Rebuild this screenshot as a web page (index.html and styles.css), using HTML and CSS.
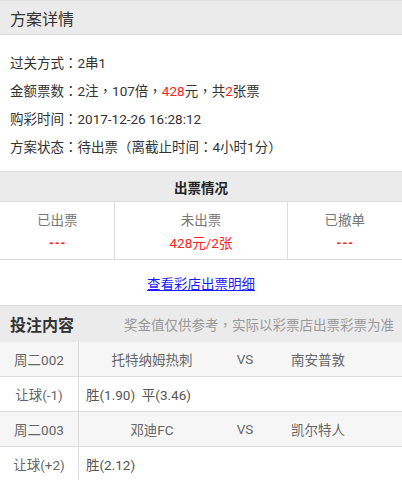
FILE: index.html
```html
<!DOCTYPE html>
<html>
<head>
<meta charset="utf-8">
<link rel="stylesheet" href="styles.css">
</head>
<body>
<div class="page">
  <div class="head-bar"><span class="head-title">方案详情</span></div>
  <div class="info">
    <div class="info-row">过关方式<span class="punct">：</span>2串1</div>
    <div class="info-row">金额票数<span class="punct">：</span>2注<span class="punct">，</span>107倍<span class="punct">，</span><span class="red">428</span>元<span class="punct">，</span>共<span class="red">2</span>张票</div>
    <div class="info-row">购彩时间<span class="punct">：</span>2017-12-26 16:28:12</div>
    <div class="info-row">方案状态<span class="punct">：</span>待出票<span class="punct">（</span>离截止时间<span class="punct">：</span>4小时1分<span class="punct">）</span></div>
  </div>

  <div class="ticket">
    <div class="ticket-head">出票情况</div>
    <div class="ticket-cols">
      <div class="tcol tcol-side"><div class="tlabel">已出票</div><div class="tval dash">---</div></div>
      <div class="tcol tcol-mid"><div class="tlabel">未出票</div><div class="tval">428元/2张</div></div>
      <div class="tcol tcol-side last"><div class="tlabel">已撤单</div><div class="tval dash">---</div></div>
    </div>
    <div class="link-row"><a class="link" href="#">查看彩店出票明细</a></div>
  </div>

  <div class="bet">
    <div class="bet-head"><span class="bet-title">投注内容</span><span class="bet-note">奖金值仅供参考<span class="punct">，</span>实际以彩票店出票彩票为准</span></div>
    <div class="row row-match">
      <div class="c1">周二002</div>
      <div class="team1">托特纳姆热刺</div>
      <div class="vs">VS</div>
      <div class="team2">南安普敦</div>
    </div>
    <div class="row row-odds">
      <div class="c1">让球(-1)</div>
      <div class="odds">胜(1.90)&nbsp;&nbsp;平(3.46)</div>
    </div>
    <div class="row row-match">
      <div class="c1">周二003</div>
      <div class="team1">邓迪FC</div>
      <div class="vs">VS</div>
      <div class="team2">凯尔特人</div>
    </div>
    <div class="row row-odds">
      <div class="c1">让球(+2)</div>
      <div class="odds">胜(2.12)</div>
    </div>
  </div>
</div>
</body>
</html>
```

FILE: styles.css
```css
html, body {
  margin: 0;
  padding: 0;
  background: #fff;
}
body {
  font-family: Roboto, "Noto Sans CJK SC", sans-serif;
  color: #333;
  font-size: 13.5px;
}
.page {
  width: 402px;
  height: 480px;
  overflow: hidden;
}
.red { color: #ff2020; }
.punct {
  font-family: "Noto Sans CJK TC", sans-serif;
}

.head-bar {
  height: 33px;
  background: #ebebeb;
  border-top: 1px solid #e2e2e2;
  border-bottom: 1px solid #dcdcdc;
  display: flex;
  align-items: center;
  padding-left: 10px;
}
.head-title {
  font-size: 16px;
  color: #333;
}

.info {
  padding: 13px 10px 11px;
}
.info-row {
  height: 28px;
  line-height: 28px;
  color: #333;
  white-space: nowrap;
}

.ticket {
  border-top: 1px solid #dcdcdc;
}
.ticket-head {
  height: 29px;
  background: #ebebeb;
  border-bottom: 1px solid #dcdcdc;
  display: flex;
  align-items: center;
  justify-content: center;
  font-weight: bold;
  color: #222;
}
.ticket-cols {
  display: flex;
  height: 57px;
  border-bottom: 1px solid #dcdcdc;
}
.tcol {
  border-right: 1px solid #dcdcdc;
  display: flex;
  flex-direction: column;
  align-items: center;
  padding-top: 8px;
  box-sizing: border-box;
}
.tcol.last { border-right: none; }
.tcol-side { flex: 2; }
.tcol-mid { flex: 3; }
.tlabel {
  color: #777;
  line-height: 20px;
  height: 20px;
}
.tval {
  color: #ff2020;
  line-height: 20px;
  margin-top: 3px;
}
.tval.dash {
  letter-spacing: 1.5px;
  margin-right: -1.5px;
  font-family: "Liberation Sans", sans-serif;
  font-weight: bold;
  font-size: 13px;
  color: #ff2020;
}
.link-row {
  height: 45px;
  display: flex;
  align-items: center;
  justify-content: center;
}
.link {
  color: #1a1aff;
  text-decoration: underline;
}

.bet {
  border-top: 1px solid #dcdcdc;
}
.bet-head {
  height: 36px;
  background: #ebebeb;
  display: flex;
  align-items: center;
  justify-content: space-between;
  padding: 0 8px 0 10px;
}
.bet-title {
  font-size: 16px;
  font-weight: bold;
  color: #333;
}
.bet-note {
  color: #999;
  white-space: nowrap;
}
.row {
  display: grid;
  grid-template-columns: 79px 146px 40px 106px 1fr;
  height: 34px;
  border-bottom: 1px solid #dcdcdc;
  align-items: stretch;
}
.row-match { background: #f6f6f6; }
.row-odds { background: #fff; }
.row > div {
  display: flex;
  align-items: center;
}
.c1 {
  justify-content: center;
  border-right: 1px solid #dcdcdc;
  color: #666;
}
.team1, .vs, .team2 {
  justify-content: center;
  color: #666;
}
.odds {
  grid-column: 2 / 6;
  padding-left: 7px;
  color: #555;
  white-space: nowrap;
}
```
